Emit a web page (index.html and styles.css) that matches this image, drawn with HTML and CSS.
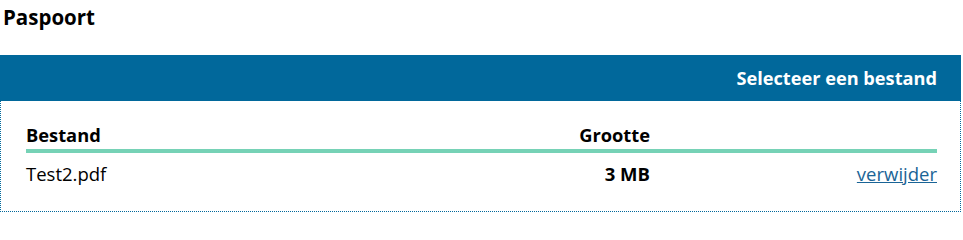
FILE: index.html
```html
<!DOCTYPE html>
<html lang="nl">
<head>
<meta charset="utf-8">
<title>Paspoort</title>
<link rel="stylesheet" href="styles.css">
</head>
<body>
<h2 class="title">Paspoort</h2>
<section class="panel">
  <div class="panel-head">Selecteer een bestand</div>
  <div class="panel-body">
    <div class="files">
      <div class="cell head">Bestand</div>
      <div class="cell head size">Grootte</div>
      <div class="cell head"></div>
      <div class="cell">Test2.pdf</div>
      <div class="cell size strong">3 MB</div>
      <div class="cell action"><a href="#" class="link">verwijder</a></div>
    </div>
  </div>
</section>
</body>
</html>
```

FILE: styles.css
```css
html, body {
  margin: 0;
  padding: 0;
  background: #ffffff;
}
body {
  font-family: "Open Sans", "Noto Sans", sans-serif;
  color: #000000;
}
.title {
  margin: 0;
  padding: 3px 0 0 3px;
  height: 52px;
  font-size: 20.5px;
  line-height: 28px;
  font-weight: 700;
}
.panel {
  width: 961px;
}
.panel-head {
  height: 46px;
  background: #01689b;
  color: #ffffff;
  display: flex;
  align-items: center;
  justify-content: flex-end;
  padding-right: 24px;
  font-size: 18.2px;
  font-weight: 700;
}
.panel-body {
  border: 1px dotted #01689b;
  border-top: none;
  padding: 21px 23px 0 25px;
  height: 89px;
}
.files {
  display: grid;
  grid-template-columns: 1fr auto 287px;
  font-size: 18.5px;
}
.cell {
  line-height: 26px;
}
.head {
  font-weight: 700;
  font-size: 18.3px;
  border-bottom: 4px solid #76d2b6;
  padding-bottom: 1px;
}
.files .cell:not(.head) {
  padding-top: 8px;
}
.size {
  text-align: right;
}
.strong {
  font-weight: 700;
}
.action {
  text-align: right;
}
.link {
  color: #1a6496;
  text-decoration: underline;
}
```
